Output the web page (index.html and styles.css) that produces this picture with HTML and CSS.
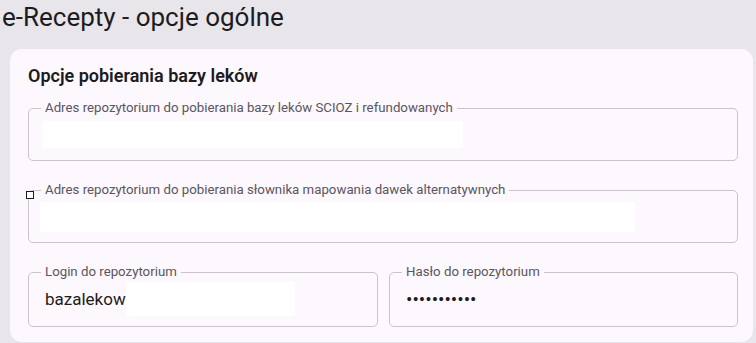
FILE: index.html
```html
<!DOCTYPE html>
<html lang="pl">
<head>
<meta charset="utf-8">
<title>e-Recepty - opcje ogólne</title>
<link rel="stylesheet" href="styles.css">
</head>
<body>
<div class="page">
  <h1 class="title">e-Recepty - opcje ogólne</h1>
  <section class="card">
    <h2 class="card-title">Opcje pobierania bazy leków</h2>
    <fieldset class="field field-a">
      <legend class="field-label">Adres repozytorium do pobierania bazy leków SCIOZ i refundowanych</legend>
      <div class="field-body body-a"><span class="blank blank-a"></span></div>
    </fieldset>
    <fieldset class="field field-b">
      <span class="mark"></span>
      <legend class="field-label">Adres repozytorium do pobierania słownika mapowania dawek alternatywnych</legend>
      <div class="field-body body-b"><span class="blank blank-b"></span></div>
    </fieldset>
    <div class="field-row">
      <fieldset class="field">
        <legend class="field-label">Login do repozytorium</legend>
        <div class="field-body body-c"><span class="value">bazalekow</span><span class="blank blank-c"></span></div>
      </fieldset>
      <fieldset class="field">
        <legend class="field-label">Hasło do repozytorium</legend>
        <div class="field-body body-c"><span class="value dots">•••••••••••</span></div>
      </fieldset>
    </div>
  </section>
</div>
</body>
</html>
```
FILE: styles.css
```css
html, body {
  margin: 0;
  padding: 0;
  height: 343px;
  overflow: hidden;
}
body {
  background: #e8e6eb;
  font-family: Roboto, "Noto Sans", "Liberation Sans", sans-serif;
  color: #1d1b20;
}
.page {
  display: flex;
  flex-direction: column;
}
.title {
  margin: 0;
  padding: 1px 0 0 2px;
  font-size: 26px;
  line-height: 32px;
  font-weight: 400;
  color: #1d1b20;
}
.card {
  margin: 16px 3px 0 10px;
  padding: 16px 15px 15px 18px;
  background: #fcf8fd;
  border-radius: 12px;
  box-sizing: border-box;
  display: flex;
  flex-direction: column;
}
.card-title {
  margin: 0 0 13px 0;
  font-size: 18px;
  line-height: 22px;
  font-weight: 600;
  color: #1d1b20;
}
.field {
  position: relative;
  margin: 0;
  padding: 0 12px;
  border: 1px solid #c8c4ca;
  border-radius: 5px;
  min-width: 0;
}
.field-b {
  margin-top: 21px;
}
.field-label {
  padding: 0 4px;
  font-size: 13.25px;
  line-height: 16px;
  color: #5a5560;
  white-space: nowrap;
}
.field-body {
  display: flex;
  align-items: flex-start;
}
.body-a {
  padding: 5px 0 12px 0;
}
.body-b {
  padding: 4px 0 10px 0;
}
.body-c {
  padding: 2px 0 10px 0;
  height: 34px;
  align-items: center;
}
.blank {
  display: block;
  background: #ffffff;
}
.blank-a {
  width: 421px;
  height: 27px;
  margin-left: 1px;
}
.blank-b {
  width: 595px;
  height: 30px;
  margin-left: -1px;
}
.blank-c {
  width: 169px;
  height: 34px;
}
.value {
  padding-left: 4px;
  font-size: 17px;
  color: #1d1b20;
}
.dots {
  font-size: 19px;
  letter-spacing: 0;
}
.field-row {
  margin-top: 21px;
  display: grid;
  grid-template-columns: 350px 349px;
  column-gap: 11px;
}
.mark {
  position: absolute;
  left: -3px;
  top: -7px;
  width: 6px;
  height: 6px;
  border: 1px solid #1d1b20;
  background: #ffffff;
}
```
